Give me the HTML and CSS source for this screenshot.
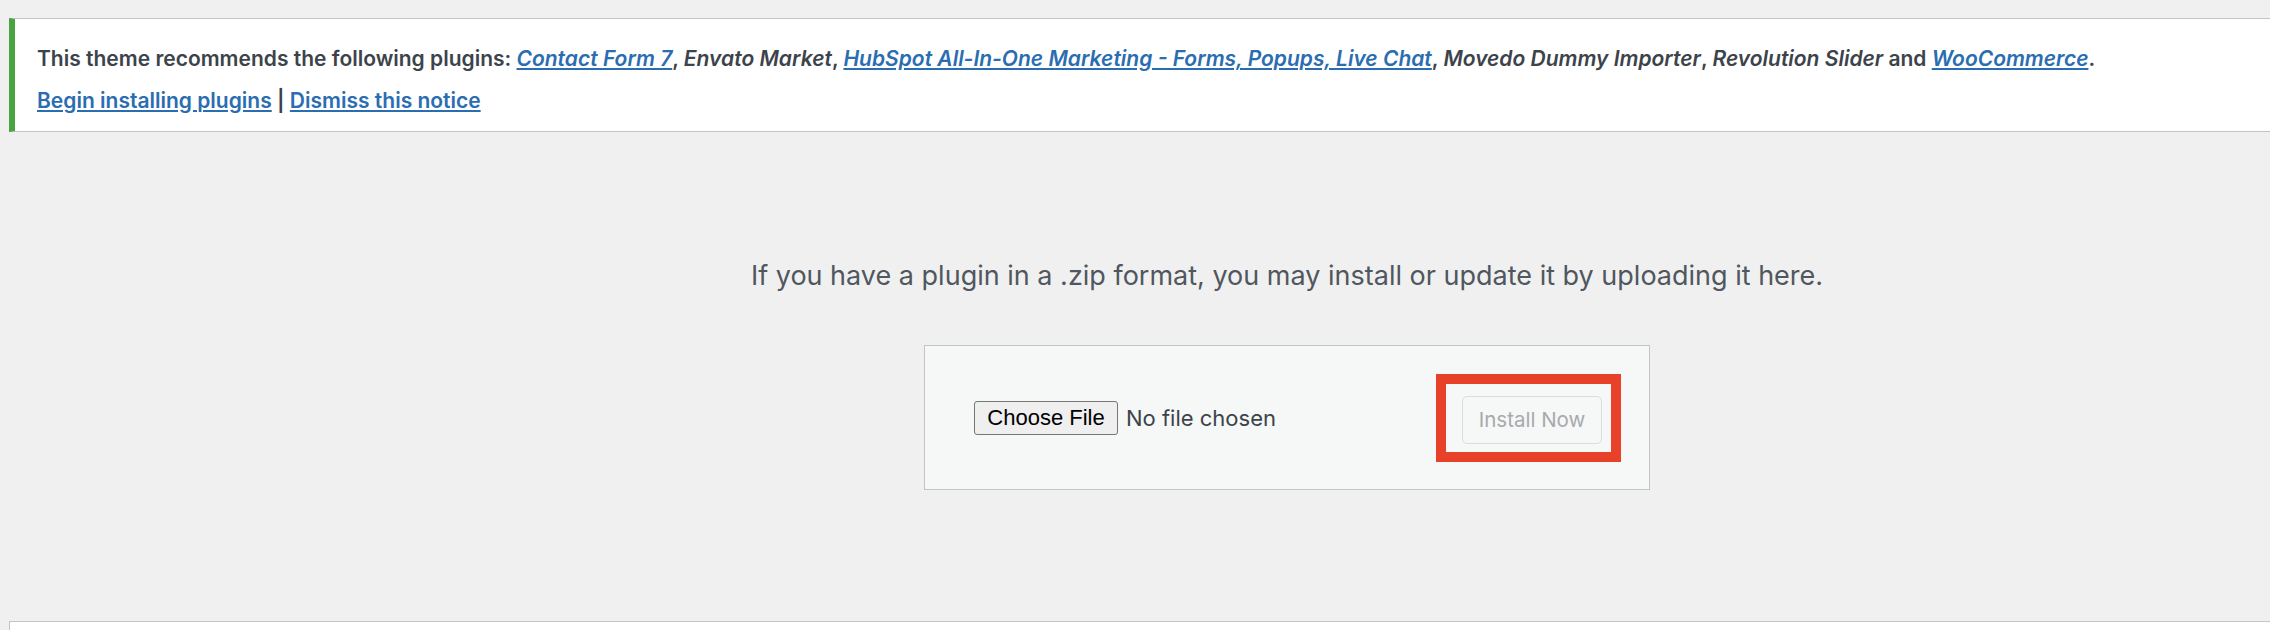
FILE: index.html
```html
<!DOCTYPE html>
<html lang="en">
<head>
    <meta charset="UTF-8">
    <meta name="viewport" content="width=device-width, initial-scale=1.0">
    <title>Add Plugins</title>
    <link rel="stylesheet" href="styles.css">
</head>
<body>
    <div class="wrap">
        <div class="notice notice-success">
            <p class="notice-line">
                This theme recommends the following plugins:
                <em><a href="#">Contact Form 7</a></em>,
                <em>Envato Market</em>,
                <em><a href="#">HubSpot All-In-One Marketing - Forms, Popups, Live Chat</a></em>,
                <em>Movedo Dummy Importer</em>,
                <em>Revolution Slider</em> and
                <em><a href="#">WooCommerce</a></em>.
            </p>
            <p class="notice-line">
                <a href="#">Begin installing plugins</a> | <a href="#">Dismiss this notice</a>
            </p>
        </div>

        <div class="upload-plugin">
            <p class="install-help">If you have a plugin in a .zip format, you may install or update it by uploading it here.</p>
            <form class="upload-form">
                <div class="file-field">
                    <button type="button" class="file-button">Choose File</button>
                    <span class="file-name">No file chosen</span>
                </div>
                <!-- 빨간 강조 테두리 -->
                <span class="highlight">
                    <button type="submit" class="install-button" disabled>Install Now</button>
                </span>
            </form>
        </div>

        <div class="plugin-list"></div>
    </div>
</body>
</html>
```

FILE: styles.css
```css
/* --- 기본 스타일 초기화 --- */
* {
    box-sizing: border-box;
    margin: 0;
    padding: 0;
}

body {
    background-color: #f0f0f1;
    color: #3c434a;
    font-family: Inter, "Liberation Sans", sans-serif;
    overflow: hidden;
    height: 630px;
}

/* 화면 오른쪽은 잘려 보이는 넓은 작업 영역 */
.wrap {
    width: 2556px;
    margin-left: 9px;
    padding-top: 18px;
}

/* --- 상단 추천 플러그인 알림 --- */
.notice {
    background-color: #fff;
    border: 1px solid #c3c4c7;
    border-left: 6px solid #4aa341;
    padding: 13px 22px 3px;
}

.notice-line {
    font-size: 21px;
    font-weight: 600;
    line-height: 28px;
    margin: 13px 0;
}

.notice-line + .notice-line {
    margin-top: 14px;
}

.notice a {
    color: #2a6db1;
    text-decoration: underline;
}

/* --- 가운데 업로드 영역 --- */
.upload-plugin {
    text-align: center;
    padding-top: 125px;
}

.install-help {
    font-size: 27px;
    line-height: 37px;
    color: #50575e;
}

.upload-form {
    display: inline-flex;
    justify-content: space-between;
    align-items: center;
    width: 726px;
    height: 145px;
    margin-top: 51px;
    padding: 0 28px 0 49px;
    background-color: #f6f7f7;
    border: 1px solid #c3c4c7;
}

.file-field {
    display: flex;
    align-items: center;
    gap: 8px;
}

.file-button {
    font-family: "Liberation Sans", Arial, sans-serif;
    font-size: 22px;
    color: #000;
    background-color: #efefef;
    border: 1px solid #767676;
    border-radius: 3px;
    width: 144px;
    height: 34px;
}

.file-name {
    font-size: 22px;
    color: #3c434a;
}

.highlight {
    display: block;
    border: 10px solid #e8412a;
    padding: 12px 9px 8px 16px;
}

.install-button {
    display: block;
    width: 140px;
    height: 48px;
    font-family: Inter, "Liberation Sans", sans-serif;
    font-size: 20.5px;
    color: #a7aaad;
    background-color: #f6f7f7;
    border: 1px solid #dcdcde;
    border-radius: 5px;
}

/* --- 하단 플러그인 목록 패널 --- */
.plugin-list {
    margin-top: 131px;
    height: 60px;
    background-color: #fff;
    border-top: 1px solid #c3c4c7;
    border-left: 1px solid #c3c4c7;
}
```
